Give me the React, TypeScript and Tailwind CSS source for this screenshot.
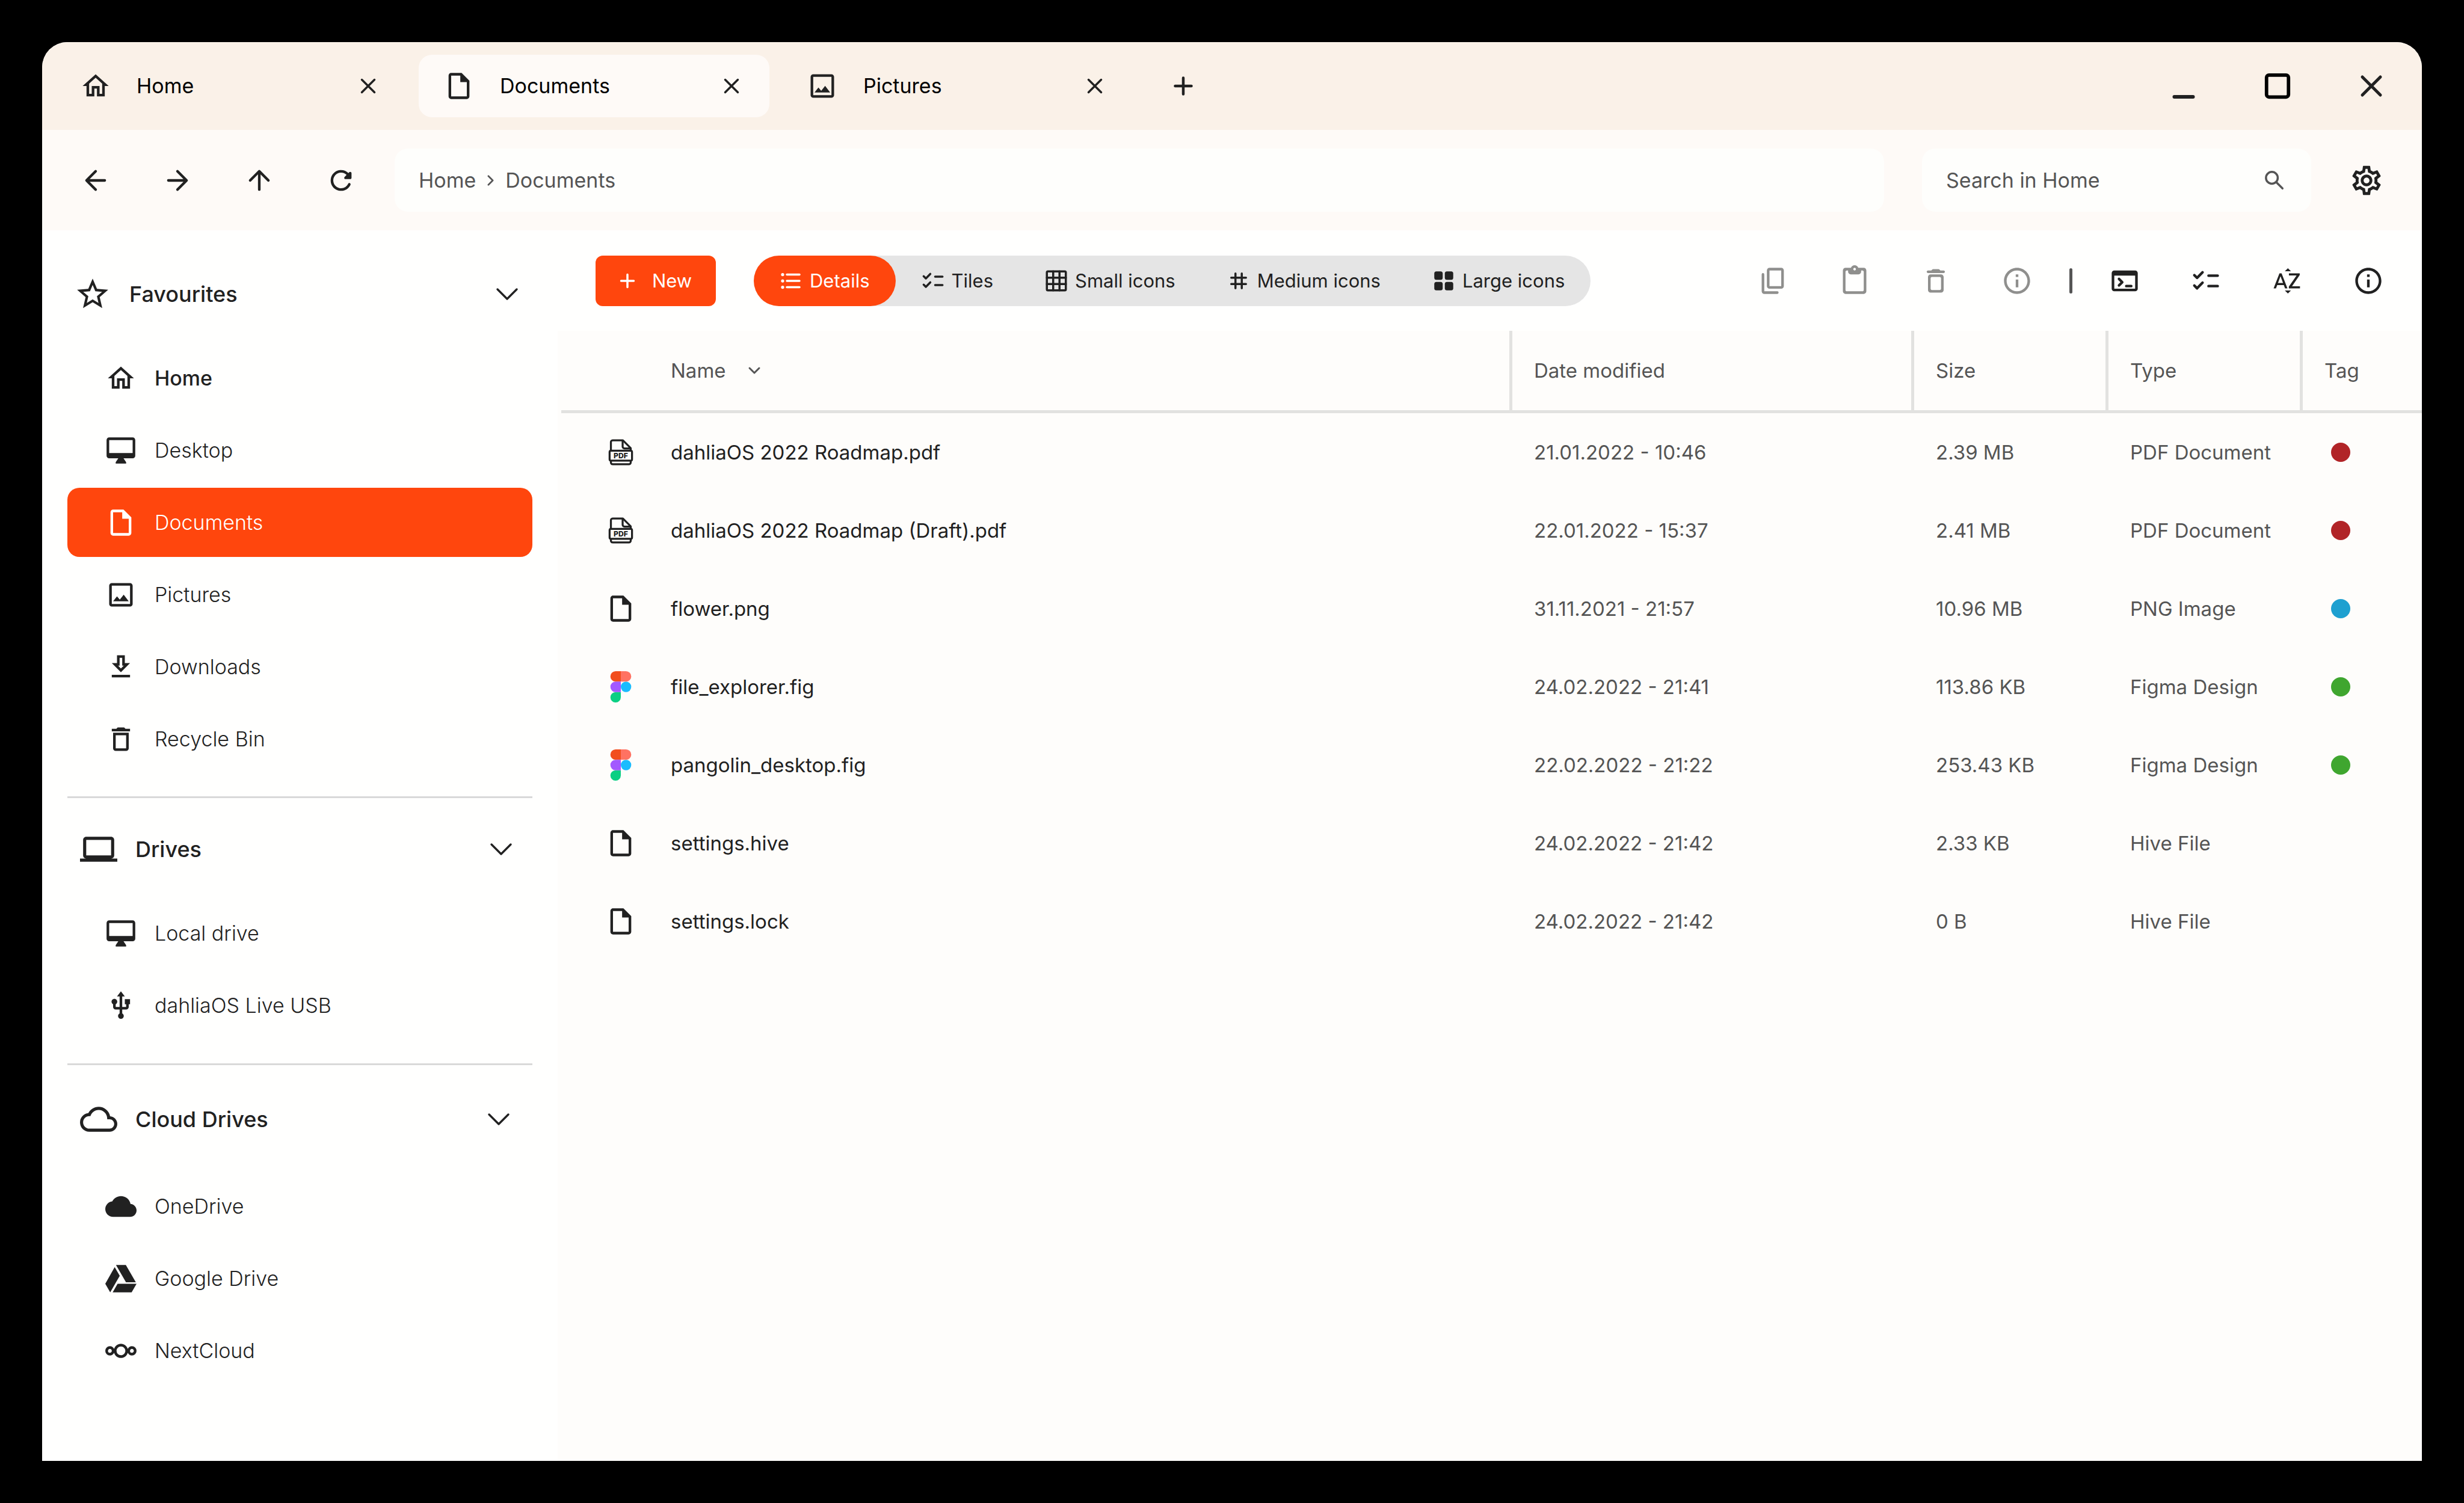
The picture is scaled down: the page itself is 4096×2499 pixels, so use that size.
import React from "react";
import {
  MdCloud,
  MdCloudQueue,
  MdLaptop,
  MdOutlineDelete,
  MdOutlineHome,
  MdOutlineImage,
  MdOutlineInsertDriveFile,
  MdOutlineSettings,
  MdSortByAlpha,
  MdStarBorder,
  MdUsb,
} from "react-icons/md";
import { FaGoogleDrive } from "react-icons/fa";
import { SiNextcloud } from "react-icons/si";

type IconProps = { className?: string };

function Stroke({
  className,
  width = 2,
  children,
}: IconProps & { width?: number; children: React.ReactNode }) {
  return (
    <svg
      viewBox="0 0 24 24"
      className={className}
      fill="none"
      stroke="currentColor"
      strokeWidth={width}
      strokeLinecap="round"
      strokeLinejoin="round"
      aria-hidden="true"
    >
      {children}
    </svg>
  );
}

const CloseIcon = ({ className }: IconProps) => (
  <Stroke className={className}>
    <path d="M6 6l12 12M18 6L6 18" />
  </Stroke>
);
const PlusIcon = ({ className }: IconProps) => (
  <Stroke className={className}>
    <path d="M12 6v12M6 12h12" />
  </Stroke>
);
const MinimizeIcon = ({ className }: IconProps) => (
  <Stroke className={className} width={2.4}>
    <path d="M5.8 19.2h12.4" />
  </Stroke>
);
const MaximizeIcon = ({ className }: IconProps) => (
  <Stroke className={className} width={2.3}>
    <rect x="4.7" y="4.7" width="14.6" height="14.6" rx="1.6" />
  </Stroke>
);
const BackIcon = ({ className }: IconProps) => (
  <Stroke className={className}>
    <path d="M19 12H5.5M12 5l-7 7 7 7" />
  </Stroke>
);
const ForwardIcon = ({ className }: IconProps) => (
  <Stroke className={className}>
    <path d="M5 12h13.5M12 5l7 7-7 7" />
  </Stroke>
);
const UpIcon = ({ className }: IconProps) => (
  <Stroke className={className}>
    <path d="M12 19V5.5M5 12l7-7 7 7" />
  </Stroke>
);
const RefreshIcon = ({ className }: IconProps) => (
  <svg viewBox="0 0 24 24" className={className} fill="currentColor" aria-hidden="true">
    <path d="M17.65 6.35c-1.63-1.63-3.94-2.57-6.48-2.31-3.67.37-6.69 3.35-7.1 7.02C3.52 15.91 7.27 20 12 20c3.19 0 5.93-1.87 7.21-4.56.32-.67-.16-1.44-.9-1.44-.37 0-.72.2-.88.53-1.13 2.43-3.84 3.97-6.8 3.31-2.22-.49-4.01-2.3-4.48-4.52C5.31 9.44 8.26 6 12 6c1.66 0 3.14.69 4.22 1.78l-1.51 1.51c-.63.63-.19 1.71.7 1.71H19c.55 0 1-.45 1-1V6.41c0-.89-1.08-1.34-1.71-.71l-.64.65z" />
  </svg>
);
const SearchIcon = ({ className }: IconProps) => (
  <Stroke className={className} width={2}>
    <circle cx="9.5" cy="9.5" r="5.6" />
    <path d="M14 14l5.6 5.6" />
  </Stroke>
);
const ChevronIcon = ({ className, width = 3.4 }: IconProps & { width?: number }) => (
  <svg
    viewBox="0 0 36 20"
    className={className}
    fill="none"
    stroke="currentColor"
    strokeWidth={width}
    strokeLinecap="round"
    strokeLinejoin="round"
    overflow="visible"
    aria-hidden="true"
  >
    <path d="M2 2l16 16L34 2" />
  </svg>
);
const MonitorIcon = ({ className }: IconProps) => (
  <svg viewBox="0 0 24 24" className={className} fill="currentColor" aria-hidden="true">
    <path
      fillRule="evenodd"
      d="M21 2H3c-1.1 0-2 .9-2 2v12c0 1.1.9 2 2 2h7l-2 3v1h8v-1l-2-3h7c1.1 0 2-.9 2-2V4c0-1.1-.9-2-2-2zM3 4h18v10H3V4z"
    />
  </svg>
);
const DownloadIcon = ({ className }: IconProps) => (
  <svg viewBox="0 0 24 24" className={className} fill="currentColor" aria-hidden="true">
    <path
      fillRule="evenodd"
      d="M19 9h-4V3H9v6H5l7 7 7-7zm-8 2V5h2v6h1.17L12 13.17 9.83 11H11zm-6 7h14v2H5v-2z"
    />
  </svg>
);
const ListIcon = ({ className }: IconProps) => (
  <svg viewBox="0 0 24 24" className={className} fill="currentColor" aria-hidden="true">
    <circle cx="4" cy="6" r="1.5" />
    <circle cx="4" cy="12" r="1.5" />
    <circle cx="4" cy="18" r="1.5" />
    <rect x="7" y="5" width="14" height="2" rx="1" />
    <rect x="7" y="11" width="14" height="2" rx="1" />
    <rect x="7" y="17" width="14" height="2" rx="1" />
  </svg>
);
const ChecklistIcon = ({ className }: IconProps) => (
  <Stroke className={className}>
    <path d="M3.1 7.6L5.2 9.7 9.4 5.4M3.1 15.6l2.1 2.1 4.2-4.3M14 8h7M14 16h7" />
  </Stroke>
);
const GridIcon = ({ className }: IconProps) => (
  <Stroke className={className}>
    <rect x="3" y="3" width="18" height="18" rx="1" />
    <path d="M9 3v18M15 3v18M3 9h18M3 15h18" />
  </Stroke>
);
const HashIcon = ({ className }: IconProps) => (
  <Stroke className={className}>
    <path d="M9 5v14M15 5v14M5 9h14M5 15h14" />
  </Stroke>
);
const TilesIcon = ({ className }: IconProps) => (
  <svg viewBox="0 0 24 24" className={className} fill="currentColor" aria-hidden="true">
    <rect x="3" y="3" width="8" height="8" rx="2" />
    <rect x="13" y="3" width="8" height="8" rx="2" />
    <rect x="3" y="13" width="8" height="8" rx="2" />
    <rect x="13" y="13" width="8" height="8" rx="2" />
  </svg>
);
const CopyIcon = ({ className }: IconProps) => (
  <Stroke className={className}>
    <rect x="8" y="3" width="11" height="14" rx="1" />
    <path d="M4 7v13a1 1 0 0 0 1 1h10" />
  </Stroke>
);
const PasteIcon = ({ className }: IconProps) => (
  <svg viewBox="0 0 24 24" className={className} fill="currentColor" aria-hidden="true">
    <path d="M19 2h-4.18C14.4.84 13.3 0 12 0S9.6.84 9.18 2H5c-1.1 0-2 .9-2 2v16c0 1.1.9 2 2 2h14c1.1 0 2-.9 2-2V4c0-1.1-.9-2-2-2zm-7 0c.55 0 1 .45 1 1s-.45 1-1 1-1-.45-1-1 .45-1 1-1zm6 18H6c-.55 0-1-.45-1-1V5c0-.55.45-1 1-1h1v1c0 1.1.9 2 2 2h6c1.1 0 2-.9 2-2V4h1c.55 0 1 .45 1 1v14c0 .55-.45 1-1 1z" />
  </svg>
);
const TrashIcon = ({ className }: IconProps) => (
  <svg viewBox="0 0 24 24" className={className} fill="currentColor" aria-hidden="true">
    <path d="M6 19c0 1.1.9 2 2 2h8c1.1 0 2-.9 2-2V9c0-1.1-.9-2-2-2H8c-1.1 0-2 .9-2 2v10zM9 9h6c.55 0 1 .45 1 1v8c0 .55-.45 1-1 1H9c-.55 0-1-.45-1-1v-8c0-.55.45-1 1-1zm6.5-5l-.71-.71c-.18-.18-.44-.29-.7-.29H9.91c-.26 0-.52.11-.7.29L8.5 4H6c-.55 0-1 .45-1 1s.45 1 1 1h12c.55 0 1-.45 1-1s-.45-1-1-1h-2.5z" />
  </svg>
);
const InfoIcon = ({ className }: IconProps) => (
  <svg viewBox="0 0 24 24" className={className} fill="currentColor" aria-hidden="true">
    <path d="M11 7h2v2h-2zm0 4h2v6h-2zm1-9C6.48 2 2 6.48 2 12s4.48 10 10 10 10-4.48 10-10S17.52 2 12 2zm0 18c-4.41 0-8-3.59-8-8s3.59-8 8-8 8 3.59 8 8-3.59 8-8 8z" />
  </svg>
);
const TerminalIcon = ({ className }: IconProps) => (
  <svg viewBox="0 0 24 24" className={className} fill="currentColor" aria-hidden="true">
    <path
      fillRule="evenodd"
      d="M20 4H4c-1.1 0-2 .9-2 2v12c0 1.1.9 2 2 2h16c1.1 0 2-.9 2-2V6c0-1.1-.9-2-2-2zM4 8h16v10H4V8z"
    />
    <path
      d="M7.6 10.5l2.5 2.5-2.5 2.5M13.2 16h3.8"
      fill="none"
      stroke="currentColor"
      strokeWidth="2"
      strokeLinecap="round"
      strokeLinejoin="round"
    />
  </svg>
);
const PdfIcon = ({ className }: IconProps) => (
  <svg viewBox="0 0 24 24" className={className} aria-hidden="true">
    <g fill="none" stroke="currentColor" strokeWidth="1.5" strokeLinejoin="round">
      <path d="M4.4 10.6V4.2A1.4 1.4 0 0 1 5.8 2.8h7.8l6 6v1.8" />
      <path d="M13.4 3v4.6a1.4 1.4 0 0 0 1.4 1.4h4.6" />
      <rect x="3.4" y="10.8" width="17.2" height="7.6" rx="1" />
      <path d="M4.4 18.6v1.2a1.4 1.4 0 0 0 1.4 1.4h12.4a1.4 1.4 0 0 0 1.4-1.4v-1.2" />
    </g>
    <text
      x="12"
      y="16.6"
      textAnchor="middle"
      fontSize="5.6"
      fontWeight="800"
      fontFamily="Inter, sans-serif"
      fill="currentColor"
    >
      PDF
    </text>
  </svg>
);
const FigmaIcon = ({ className }: IconProps) => (
  <svg viewBox="0 0 38 57" className={className} aria-hidden="true">
    <path fill="#1abcfe" d="M19 28.5a9.5 9.5 0 1 1 19 0 9.5 9.5 0 0 1-19 0z" />
    <path fill="#0acf83" d="M0 47.5A9.5 9.5 0 0 1 9.5 38H19v9.5a9.5 9.5 0 1 1-19 0z" />
    <path fill="#ff7262" d="M19 0v19h9.5a9.5 9.5 0 1 0 0-19H19z" />
    <path fill="#f24e1e" d="M0 9.5A9.5 9.5 0 0 0 9.5 19H19V0H9.5A9.5 9.5 0 0 0 0 9.5z" />
    <path fill="#a259ff" d="M0 28.5A9.5 9.5 0 0 0 9.5 38H19V19H9.5A9.5 9.5 0 0 0 0 28.5z" />
  </svg>
);

type Icon = (props: IconProps) => React.ReactNode;

const tabs: { label: string; icon: Icon; active?: boolean }[] = [
  { label: "Home", icon: MdOutlineHome },
  { label: "Documents", icon: MdOutlineInsertDriveFile, active: true },
  { label: "Pictures", icon: MdOutlineImage },
];

type Place = { label: string; icon: Icon; tone?: "active" | "strong" };

const favourites: Place[] = [
  { label: "Home", icon: MdOutlineHome, tone: "strong" },
  { label: "Desktop", icon: MonitorIcon },
  { label: "Documents", icon: MdOutlineInsertDriveFile, tone: "active" },
  { label: "Pictures", icon: MdOutlineImage },
  { label: "Downloads", icon: DownloadIcon },
  { label: "Recycle Bin", icon: MdOutlineDelete },
];
const drives: Place[] = [
  { label: "Local drive", icon: MonitorIcon },
  { label: "dahliaOS Live USB", icon: MdUsb },
];
const clouds: Place[] = [
  { label: "OneDrive", icon: MdCloud },
  { label: "Google Drive", icon: FaGoogleDrive },
  { label: "NextCloud", icon: SiNextcloud },
];

const views: { label: string; icon: Icon; active?: boolean }[] = [
  { label: "Details", icon: ListIcon, active: true },
  { label: "Tiles", icon: ChecklistIcon },
  { label: "Small icons", icon: GridIcon },
  { label: "Medium icons", icon: HashIcon },
  { label: "Large icons", icon: TilesIcon },
];

const files: {
  name: string;
  icon: "pdf" | "file" | "figma";
  date: string;
  size: string;
  type: string;
  tag?: string;
}[] = [
  { name: "dahliaOS 2022 Roadmap.pdf", icon: "pdf", date: "21.01.2022 - 10:46", size: "2.39 MB", type: "PDF Document", tag: "bg-[#b12427]" },
  { name: "dahliaOS 2022 Roadmap (Draft).pdf", icon: "pdf", date: "22.01.2022 - 15:37", size: "2.41 MB", type: "PDF Document", tag: "bg-[#b12427]" },
  { name: "flower.png", icon: "file", date: "31.11.2021 - 21:57", size: "10.96 MB", type: "PNG Image", tag: "bg-[#1ea0d0]" },
  { name: "file_explorer.fig", icon: "figma", date: "24.02.2022 - 21:41", size: "113.86 KB", type: "Figma Design", tag: "bg-[#3fa62f]" },
  { name: "pangolin_desktop.fig", icon: "figma", date: "22.02.2022 - 21:22", size: "253.43 KB", type: "Figma Design", tag: "bg-[#3fa62f]" },
  { name: "settings.hive", icon: "file", date: "24.02.2022 - 21:42", size: "2.33 KB", type: "Hive File" },
  { name: "settings.lock", icon: "file", date: "24.02.2022 - 21:42", size: "0 B", type: "Hive File" },
];

function TitleBar() {
  return (
    <header className="flex h-[146px] items-center bg-[#faf1e8] pl-[22px] pr-[54px]">
      <div className="flex items-center gap-[21px]">
        {tabs.map(({ label, icon: TabIcon, active }) => (
          <div
            key={label}
            className={`flex h-[104px] w-[583px] items-center rounded-[22px] pl-[41px] pr-[42px] ${active ? "bg-[#fefaf7]" : ""}`}
          >
            <button className="flex flex-1 items-center gap-[42px] text-left text-black">
              <TabIcon className="size-[52px] text-[#212121]" />
              {label}
            </button>
            <button aria-label={`Close ${label}`}>
              <CloseIcon className="size-[42px]" />
            </button>
          </div>
        ))}
      </div>
      <button aria-label="New tab" className="ml-[57px]">
        <PlusIcon className="size-[54px]" />
      </button>
      <div className="ml-auto flex items-center gap-[96px]">
        <button aria-label="Minimize">
          <MinimizeIcon className="size-[60px]" />
        </button>
        <button aria-label="Maximize" className="text-black">
          <MaximizeIcon className="size-[60px]" />
        </button>
        <button aria-label="Close window">
          <CloseIcon className="size-[60px]" />
        </button>
      </div>
    </header>
  );
}

function NavBar() {
  return (
    <div className="flex h-[167px] items-center gap-[63px] bg-[#fefaf7] px-[63px]">
      <div className="flex gap-[84px]">
        <button aria-label="Back"><BackIcon className="size-[52px]" /></button>
        <button aria-label="Forward"><ForwardIcon className="size-[52px]" /></button>
        <button aria-label="Up"><UpIcon className="size-[52px]" /></button>
        <button aria-label="Refresh"><RefreshIcon className="size-[52px]" /></button>
      </div>
      <nav
        aria-label="Path"
        className="flex h-[105px] flex-1 items-center gap-[19px] rounded-[22px] bg-[#fefefc] px-[40px] text-[#555]"
      >
        <a href="#home">Home</a>
        <svg viewBox="0 0 12 20" className="h-[18px] w-[11px]" fill="none" stroke="currentColor" strokeWidth="3" strokeLinecap="round" strokeLinejoin="round" aria-hidden="true">
          <path d="M2 2l8 8-8 8" />
        </svg>
        <a href="#documents">Documents</a>
      </nav>
      <label className="flex h-[105px] w-[647px] items-center rounded-[22px] bg-[#fefefc] px-[40px] text-[#555]">
        <input
          aria-label="Search in Home"
          placeholder="Search in Home"
          className="min-w-0 flex-1 bg-transparent outline-none placeholder:text-[#555] placeholder:opacity-100"
        />
        <SearchIcon className="size-[42px]" />
      </label>
      <button aria-label="Settings">
        <MdOutlineSettings className="size-[58px]" />
      </button>
    </div>
  );
}

function Section({
  title,
  icon: SectionIcon,
  places,
  header,
  list,
}: {
  title: string;
  icon: Icon;
  places: Place[];
  header: string;
  list: string;
}) {
  return (
    <section>
      <button className={`flex h-[115px] w-full items-center text-left text-[36px] font-medium ${header}`}>
        <SectionIcon className="size-[62px]" />
        <span className="flex-1">{title}</span>
        <ChevronIcon className="h-[20px] w-[36px]" />
      </button>
      <ul className={`flex flex-col gap-[5px] ${list}`}>
        {places.map(({ label, icon: PlaceIcon, tone }) => (
          <li key={label}>
            <a
              href={`#${label}`}
              className={`flex h-[115px] items-center gap-[30px] rounded-[20px] pl-[63px] ${
                tone === "active" ? "bg-[#ff460d] font-light text-white" : tone === "strong" ? "font-medium" : "font-light"
              }`}
            >
              <PlaceIcon className="size-[52px]" />
              {label}
            </a>
          </li>
        ))}
      </ul>
    </section>
  );
}

function Sidebar() {
  return (
    <aside className="w-[857px] shrink-0 bg-[#fffffe] px-[42px] pb-[60px] pt-[48px]">
      <Section
        title="Favourites"
        icon={MdStarBorder}
        places={favourites}
        header="gap-[30px] pl-[11px] pr-[24px]"
        list="mt-[25px]"
      />
      <hr className="mb-[27px] mt-[38px] border-t-[3px] border-[#d9d9d9]" />
      <Section
        title="Drives"
        icon={MdLaptop}
        places={drives}
        header="gap-[30px] pl-[21px] pr-[34px]"
        list="mt-[25px]"
      />
      <hr className="mb-[32px] mt-[39px] border-t-[3px] border-[#d9d9d9]" />
      <Section
        title="Cloud Drives"
        icon={MdCloudQueue}
        places={clouds}
        header="gap-[30px] pl-[21px] pr-[38px]"
        list="mt-[30px]"
      />
    </aside>
  );
}

function Toolbar() {
  return (
    <div className="flex h-[167px] items-center gap-[63px] bg-[#fffffe] px-[63px]">
      <button className="flex h-[84px] w-[200px] items-center gap-[20px] rounded-[12px] bg-[#ff460d] pl-[32px] text-[31px] text-white">
        <PlusIcon className="size-[42px]" />
        New
      </button>
      <div className="flex h-[84px] rounded-full bg-[#e5e5e5] text-[31px]">
        {views.map(({ label, icon: ViewIcon, active }) => (
          <button
            key={label}
            aria-pressed={!!active}
            className={`flex items-center gap-[10px] whitespace-nowrap rounded-full pl-[41px] pr-[43px] ${active ? "bg-[#ff460d] text-white" : ""}`}
          >
            <ViewIcon className="size-[42px]" />
            {label}
          </button>
        ))}
      </div>
      <div className="ml-auto flex items-center gap-[61px]">
        <div className="flex gap-[83px] text-[#8f8f8d]">
          <button aria-label="Copy"><CopyIcon className="size-[52px]" /></button>
          <button aria-label="Paste"><PasteIcon className="size-[52px]" /></button>
          <button aria-label="Delete"><TrashIcon className="size-[52px]" /></button>
          <button aria-label="Properties"><InfoIcon className="size-[52px]" /></button>
        </div>
        <div className="h-[42px] w-[5px] rounded-full bg-[#555]" />
        <div className="flex gap-[83px]">
          <button aria-label="Open terminal"><TerminalIcon className="size-[52px]" /></button>
          <button aria-label="Select"><ChecklistIcon className="size-[52px]" /></button>
          <button aria-label="Sort"><MdSortByAlpha className="size-[52px]" /></button>
          <button aria-label="About"><InfoIcon className="size-[52px]" /></button>
        </div>
      </div>
    </div>
  );
}

function FileTable() {
  return (
    <div className="flex-1 bg-[#fefdfb] pl-[6px]">
      <table className="w-full table-fixed border-separate border-spacing-0 text-left text-[33px] text-[#555]">
        <colgroup>
          <col />
          <col className="w-[668px]" />
          <col className="w-[323px]" />
          <col className="w-[323px]" />
          <col className="w-[203px]" />
        </colgroup>
        <thead>
          <tr className="h-[137px]">
            <th className="border-b-[5px] border-[#e2e2e0] pl-[182px] font-normal">
              <button className="flex items-center gap-[38px]">
                Name
                <ChevronIcon className="h-[10px] w-[18px]" width={6} />
              </button>
            </th>
            {["Date modified", "Size", "Type", "Tag"].map((title) => (
              <th key={title} className="border-b-[5px] border-l-[5px] border-[#e2e2e0] pl-[36px] font-normal">
                {title}
              </th>
            ))}
          </tr>
        </thead>
        <tbody>
          {files.map((file) => (
            <tr key={file.name} className="h-[130px]">
              <td className="pl-[73px] text-[#212121]">
                <div className="flex items-center gap-[57px]">
                  {file.icon === "pdf" && <PdfIcon className="size-[52px]" />}
                  {file.icon === "file" && <MdOutlineInsertDriveFile className="size-[52px]" />}
                  {file.icon === "figma" && <FigmaIcon className="h-[52px] w-[52px]" />}
                  {file.name}
                </div>
              </td>
              <td className="pl-[41px]">{file.date}</td>
              <td className="pl-[41px]">{file.size}</td>
              <td className="pl-[41px]">{file.type}</td>
              <td className="pl-[52px]">
                {file.tag && <div className={`size-[32px] rounded-full ${file.tag}`} />}
              </td>
            </tr>
          ))}
        </tbody>
      </table>
    </div>
  );
}

export default function App() {
  return (
    <div className="flex min-h-screen flex-col bg-black p-[70px] font-['Inter',sans-serif] text-[34px] leading-[48px] text-[#212121]">
      <div className="flex flex-1 flex-col overflow-hidden rounded-t-[42px] bg-[#fffffe]">
        <TitleBar />
        <NavBar />
        <div className="flex flex-1">
          <Sidebar />
          <main className="flex min-w-0 flex-1 flex-col">
            <Toolbar />
            <FileTable />
          </main>
        </div>
      </div>
    </div>
  );
}
